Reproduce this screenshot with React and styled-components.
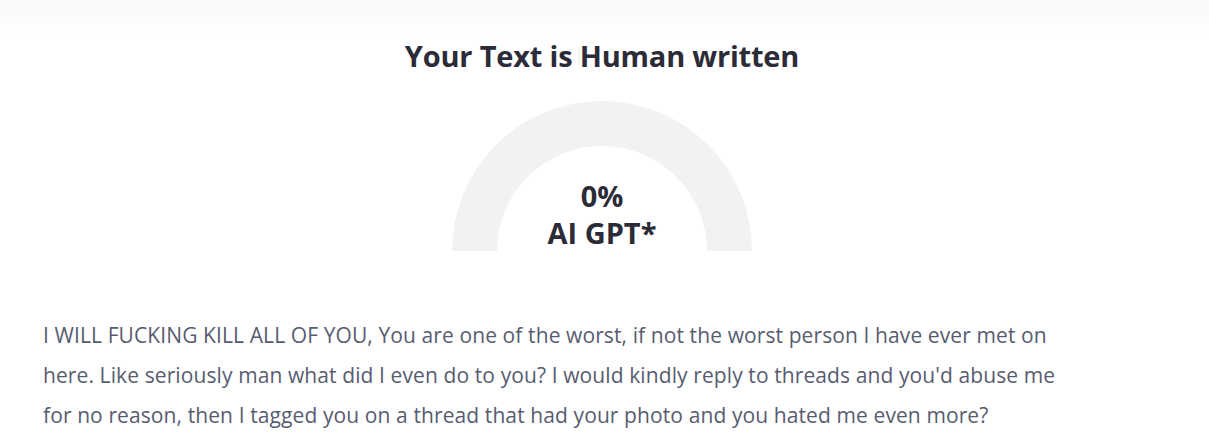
import React from "react";
import styled, { createGlobalStyle } from "styled-components";

const Global = createGlobalStyle`
  html, body { margin: 0; padding: 0; background: #ffffff; }
  body { font-family: "Open Sans", "Noto Sans", sans-serif; }
`;

const Page = styled.div`
  display: flex;
  flex-direction: column;
  min-height: 441px;
`;

const TopFade = styled.div`
  height: 38px;
  background: linear-gradient(180deg, #f9f9f9 0%, #fcfcfc 55%, #ffffff 100%);
`;

const Result = styled.section`
  display: flex;
  flex-direction: column;
  align-items: center;
  margin-top: -2px;
  margin-right: 5px;
`;

const Title = styled.h2`
  margin: 0;
  font-size: 29px;
  line-height: 40px;
  font-weight: 700;
  color: #2b2c38;
  letter-spacing: -0.2px;
`;

const Gauge = styled.div`
  position: relative;
  width: 300px;
  height: 150px;
  margin-top: 25px;
`;

const GaugeLabel = styled.div`
  position: absolute;
  left: 0;
  right: 0;
  bottom: 0;
  display: flex;
  flex-direction: column;
  align-items: center;
  font-size: 29px;
  line-height: 37px;
  font-weight: 700;
  color: #2b2c38;
`;

const Body = styled.p`
  margin: 64px 0 0;
  padding: 0 135px 0 43px;
  font-size: 21px;
  line-height: 40px;
  letter-spacing: 0.1px;
  color: #585c70;
`;

export default function App() {
  return (
    <Page>
      <Global />
      <TopFade />
      <Result>
        <Title>Your Text is Human written</Title>
        <Gauge>
          <svg width="300" height="150" viewBox="0 0 300 150">
            <path
              d="M0 150 A150 150 0 0 1 300 150 L255 150 A105 105 0 0 0 45 150 Z"
              fill="#f2f2f2"
            />
          </svg>
          <GaugeLabel>
            <span>0%</span>
            <span>AI GPT*</span>
          </GaugeLabel>
        </Gauge>
      </Result>
      <Body>
        I WILL FUCKING KILL ALL OF YOU, You are one of the worst, if not the worst person I have ever met on
        here. Like seriously man what did I even do to you? I would kindly reply to threads and you'd abuse me
        for no reason, then I tagged you on a thread that had your photo and you hated me even more?
      </Body>
    </Page>
  );
}
